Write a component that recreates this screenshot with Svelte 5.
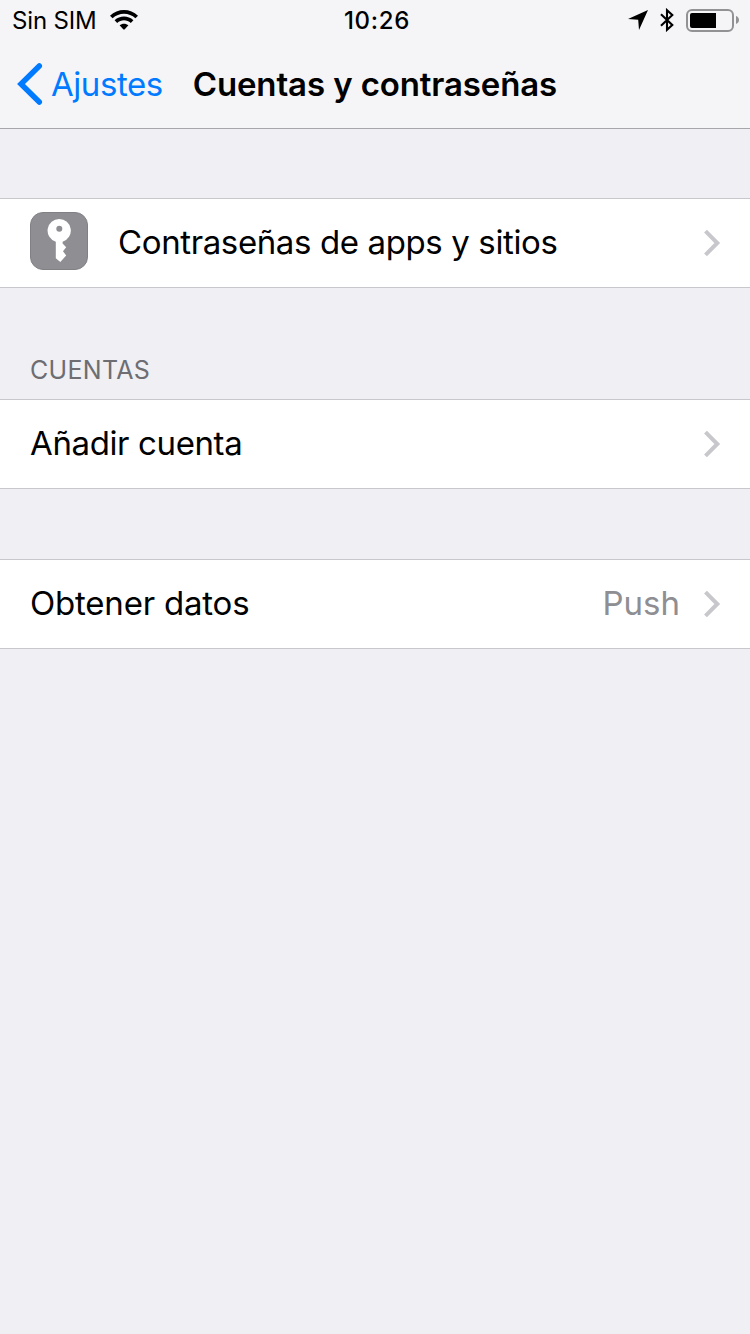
<script lang="ts">
	interface Row {
		label: string;
		value?: string;
		icon?: boolean;
	}

	interface Section {
		title?: string;
		rows: Row[];
	}

	let carrier = 'Sin SIM';
	let time = '10:26';
	let batteryLevel = 0.65;

	let sections: Section[] = [
		{ rows: [{ label: 'Contraseñas de apps y sitios', icon: true }] },
		{ title: 'Cuentas', rows: [{ label: 'Añadir cuenta' }] },
		{ rows: [{ label: 'Obtener datos', value: 'Push' }] }
	];
</script>

<div class="screen">
	<header>
		<div class="status-bar">
			<div class="status-left">
				<span class="carrier">{carrier}</span>
				<svg class="wifi" width="28" height="20" viewBox="0 0 28 20">
					<path d="M0 5.7 C7.6 -1.9 20.4 -1.9 28 5.7 L25.4 8.3 C19.2 2.2 8.8 2.2 2.6 8.3 Z" />
					<path d="M4.6 10.3 C9.8 5.3 18.2 5.3 23.4 10.3 L20.8 12.9 C17 9.4 11 9.4 7.2 12.9 Z" />
					<path d="M9.6 15.3 C12 13.2 16 13.2 18.4 15.3 L15 18.9 Q14 20 13 18.9 Z" />
				</svg>
			</div>
			<span class="time">{time}</span>
			<div class="status-right">
				<svg class="location" width="20" height="20" viewBox="0 0 20 20">
					<path d="M20 0 L11 20 L10.2 9.8 L0 9 Z" />
				</svg>
				<svg class="bluetooth" width="14" height="24" viewBox="0 0 14 24">
					<path
						d="M1 6.3 L12.3 17 L7 21.8 V2.2 L12.3 7 L1 17.7"
						fill="none"
						stroke="#000"
						stroke-width="2.1"
					/>
				</svg>
				<div class="battery">
					<div class="battery-fill" style="width: {batteryLevel * 100}%"></div>
				</div>
				<svg class="battery-tip" width="3" height="8" viewBox="0 0 3 8">
					<path d="M0 0 C1.8 .6 3 2.2 3 4 S1.8 7.4 0 8 Z" />
				</svg>
			</div>
		</div>
		<nav>
			<button class="back">
				<svg width="26" height="42" viewBox="0 0 26 42">
					<path d="M22.3 3 L4 21 L22.3 39" />
				</svg>
				<span>Ajustes</span>
			</button>
			<h1>Cuentas y contraseñas</h1>
		</nav>
	</header>

	<main>
		{#each sections as section}
			<section class:titled={section.title}>
				{#if section.title}
					<h2>{section.title}</h2>
				{/if}
				<div class="group">
					{#each section.rows as row}
						<div class="row">
							{#if row.icon}
								<svg class="row-icon" width="58" height="58" viewBox="0 0 58 58">
									<rect x=".5" y=".5" width="57" height="57" rx="12.5" fill="#8e8e93" stroke="#808085" />
									<path
										fill="#fff"
										fill-rule="evenodd"
										d="M29.3 7 A11.6 11.6 0 0 1 32.6 29.7 V31.5 L36.2 35.2 L33 39.2 L36.2 43.6 L30.3 50 L25.8 46.3 V29.7 A11.6 11.6 0 0 1 29.3 7 Z M29.3 13.8 A3 3 0 1 0 29.3 19.8 A3 3 0 1 0 29.3 13.8 Z"
									/>
								</svg>
							{/if}
							<span class="label" class:with-value={row.value}>{row.label}</span>
							{#if row.value}
								<span class="value">{row.value}</span>
							{/if}
							<svg class="chevron" width="17" height="28" viewBox="0 0 17 28">
								<path d="M1.5 2.2 L13.3 14 L1.5 25.8" />
							</svg>
						</div>
					{/each}
				</div>
			</section>
		{/each}
	</main>
</div>

<style>
	:global(body) {
		background: #efeff4;
	}

	.screen {
		min-height: 1334px;
		background: #efeff4;
		color: #000;
		font-family: Inter, 'Liberation Sans', sans-serif;
	}

	header {
		box-sizing: border-box;
		height: 129px;
		background: #f5f5f7;
		border-bottom: 1px solid #a7a7ab;
	}

	.status-bar {
		display: grid;
		grid-template-columns: 1fr auto 1fr;
		align-items: center;
		height: 40px;
		padding: 0 11px 0 12px;
	}

	.status-left,
	.status-right {
		display: flex;
		align-items: center;
	}

	.status-right {
		justify-content: flex-end;
	}

	.carrier {
		font-size: 24px;
		letter-spacing: -0.15px;
	}

	.wifi {
		margin-left: 13px;
	}

	.time {
		padding-left: 3px;
		font-size: 24px;
		font-weight: 550;
		letter-spacing: 0.7px;
	}

	.bluetooth {
		margin: 0 12px;
	}

	.battery {
		box-sizing: border-box;
		width: 48px;
		height: 23px;
		padding: 2px;
		border: 2px solid #929294;
		border-radius: 6px;
	}

	.battery-fill {
		height: 100%;
		background: #000;
		border-radius: 2px 0 0 2px;
	}

	.battery-tip {
		margin-left: 2px;
		fill: #929294;
	}

	nav {
		display: flex;
		align-items: center;
		height: 88px;
		padding-left: 17px;
	}

	.back {
		display: flex;
		align-items: center;
		gap: 8px;
		padding: 0;
		border: 0;
		background: none;
		color: #007aff;
		font: inherit;
		font-size: 33px;
		letter-spacing: -0.45px;
	}

	.back path {
		fill: none;
		stroke: #007aff;
		stroke-width: 5.5;
		stroke-linecap: round;
	}

	h1 {
		margin: 0 0 0 30px;
		font-size: 33px;
		font-weight: 600;
		letter-spacing: -0.12px;
	}

	section {
		padding-top: 70px;
	}

	section:first-child {
		padding-top: 69px;
	}

	section.titled {
		padding-top: 66px;
	}

	h2 {
		height: 45px;
		margin: 0;
		padding-left: 30px;
		color: #6d6d72;
		font-size: 25px;
		font-weight: 400;
		letter-spacing: 0.3px;
		line-height: 32px;
		text-transform: uppercase;
	}

	.group {
		background: #fff;
		border-top: 1px solid #c8c7cc;
		border-bottom: 1px solid #c8c7cc;
	}

	.row {
		display: flex;
		align-items: center;
		height: 88px;
		padding: 0 29px 0 30px;
		font-size: 33px;
	}

	.row-icon {
		margin: -4px 30px 0 0;
	}

	.label {
		flex: 1;
		margin-top: -2px;
		letter-spacing: -0.38px;
	}

	.label.with-value {
		letter-spacing: -0.2px;
	}

	.value {
		margin-top: -2px;
		color: #8e8e93;
	}

	.chevron {
		margin-left: 24px;
		fill: none;
		stroke: #c7c7cc;
		stroke-width: 4;
	}
</style>
